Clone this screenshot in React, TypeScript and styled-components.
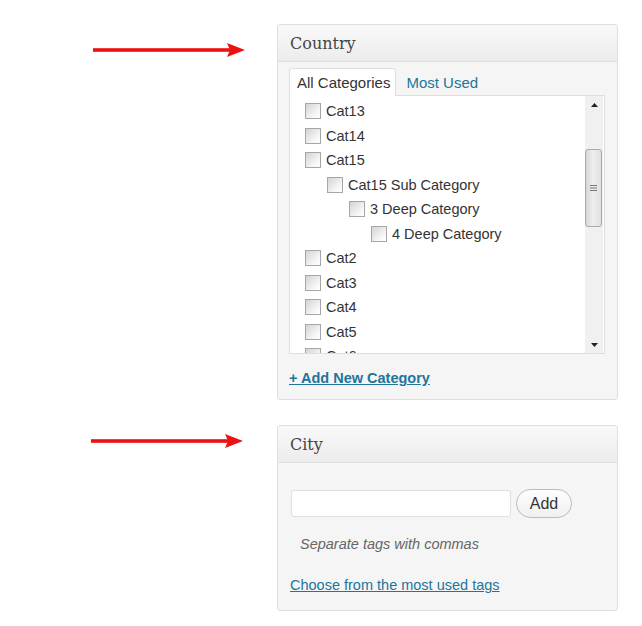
import React from 'react'
import styled, {createGlobalStyle} from 'styled-components'

type Cat = { name: string, depth: number }

const cats: Cat[] = [
    { name: 'Cat13', depth: 0 },
    { name: 'Cat14', depth: 0 },
    { name: 'Cat15', depth: 0 },
    { name: 'Cat15 Sub Category', depth: 1 },
    { name: '3 Deep Category', depth: 2 },
    { name: '4 Deep Category', depth: 3 },
    { name: 'Cat2', depth: 0 },
    { name: 'Cat3', depth: 0 },
    { name: 'Cat4', depth: 0 },
    { name: 'Cat5', depth: 0 },
    { name: 'Cat6', depth: 0 },
]

const App = () => {
    return <>
        <GlobalStyle/>
        <Page>

            <Row>
                <ArrowCell $left={93} $top={18}><RedArrow/></ArrowCell>
                <Box $height={376}>
                    <BoxHeader>Country</BoxHeader>
                    <CategoryBody>
                        <Tabs>
                            <Tab $active>All Categories</Tab>
                            <Tab>Most Used</Tab>
                        </Tabs>
                        <ListFrame>
                            <List>
                                { cats.map(it=><CatRow key={it.name} $depth={it.depth}>
                                    <Check/>
                                    <span>{it.name}</span>
                                </CatRow>) }
                            </List>
                            <Scrollbar>
                                <ScrollArrow><svg width="7" height="4"><polygon points="0,4 3.5,0 7,4" fill="#222"/></svg></ScrollArrow>
                                <Track>
                                    <Thumb>
                                        <svg width="7" height="6">
                                            <rect x="0" y="0" width="7" height="1" fill="#777"/>
                                            <rect x="0" y="2.5" width="7" height="1" fill="#777"/>
                                            <rect x="0" y="5" width="7" height="1" fill="#777"/>
                                        </svg>
                                    </Thumb>
                                </Track>
                                <ScrollArrow><svg width="7" height="4"><polygon points="0,0 3.5,4 7,0" fill="#222"/></svg></ScrollArrow>
                            </Scrollbar>
                        </ListFrame>
                        <AddLink href="#">+ Add New Category</AddLink>
                    </CategoryBody>
                </Box>
            </Row>

            <Row>
                <ArrowCell $left={91} $top={8}><RedArrow/></ArrowCell>
                <Box $height={186}>
                    <BoxHeader>City</BoxHeader>
                    <TagBody>
                        <TagForm>
                            <TagInput type="text"/>
                            <AddButton>Add</AddButton>
                        </TagForm>
                        <Hint>Separate tags with commas</Hint>
                        <MostUsed href="#">Choose from the most used tags</MostUsed>
                    </TagBody>
                </Box>
            </Row>

        </Page>
    </>
}
export default App



const RedArrow = () => <svg width="152" height="16" viewBox="0 0 152 16">
    <rect x="0" y="6.2" width="138" height="3.6" fill="#ee1111"/>
    <polygon points="134,1 152,8 134,15 137,8" fill="#ee1111"/>
</svg>


const GlobalStyle = createGlobalStyle`
  html, body {
    margin: 0;
    padding: 0;
    background: #fff;
  }
  body {
    font-family: "Liberation Sans", Arial, sans-serif;
    font-size: 14px;
    color: #333;
  }
`

const Page = styled.div`
  display: flex;
  flex-direction: column;
  gap: 25px;
  padding-top: 24px;
`

const Row = styled.div`
  display: flex;
  align-items: flex-start;
`

const ArrowCell = styled.div<{ $left: number, $top: number }>`
  width: 277px;
  box-sizing: border-box;
  padding-left: ${p=>p.$left}px;
  padding-top: ${p=>p.$top}px;
  line-height: 0;
`

const Box = styled.div<{ $height: number }>`
  width: 341px;
  height: ${p=>p.$height}px;
  box-sizing: border-box;
  border: 1px solid #dfdfdf;
  border-radius: 3px;
  background: #f5f5f5;
  display: flex;
  flex-direction: column;
`

const BoxHeader = styled.div`
  height: 36px;
  flex-shrink: 0;
  border-bottom: 1px solid #dfdfdf;
  background: linear-gradient(to bottom, #f9f9f9, #ececec);
  border-radius: 3px 3px 0 0;
  padding-left: 12px;
  display: flex;
  align-items: center;
  font-family: "DejaVu Serif", Georgia, serif;
  font-size: 16px;
  color: #464646;
`

const CategoryBody = styled.div`
  padding: 6px 12px 0 11px;
  display: flex;
  flex-direction: column;
`

const Tabs = styled.div`
  display: flex;
  height: 27px;
  gap: 2px;
  position: relative;
  z-index: 1;
`

const Tab = styled.div<{ $active?: boolean }>`
  height: 28px;
  box-sizing: border-box;
  padding: 0 5px 1px 7px;
  display: flex;
  align-items: center;
  font-size: 15px;
  border: 1px solid ${p=>p.$active ? '#dfdfdf' : 'transparent'};
  border-bottom: none;
  border-radius: 3px 3px 0 0;
  background: ${p=>p.$active ? '#fff' : 'transparent'};
  color: ${p=>p.$active ? '#333' : '#21759b'};
`

const ListFrame = styled.div`
  height: 259px;
  box-sizing: border-box;
  border: 1px solid #dfdfdf;
  background: #fff;
  display: flex;
  overflow: hidden;
`

const List = styled.div`
  flex: 1;
  padding-top: 3px;
  overflow: hidden;
`

const CatRow = styled.div<{ $depth: number }>`
  height: 24.5px;
  display: flex;
  align-items: center;
  gap: 5px;
  padding-left: ${p=>15 + p.$depth*22}px;
  font-size: 14.5px;
  color: #333;
  white-space: nowrap;
`

const Check = styled.span`
  width: 14px;
  height: 14px;
  flex-shrink: 0;
  border: 1px solid #a6a6a6;
  background: linear-gradient(135deg, #d4d4d4, #f6f6f6 70%, #fff);
`

const Scrollbar = styled.div`
  width: 18px;
  margin-right: 1px;
  background: #f0f0f0;
  display: flex;
  flex-direction: column;
`

const ScrollArrow = styled.div`
  height: 17px;
  display: flex;
  align-items: center;
  justify-content: center;
`

const Track = styled.div`
  flex: 1;
  padding-top: 36px;
`

const Thumb = styled.div`
  height: 78px;
  width: 17px;
  box-sizing: border-box;
  border: 1px solid #aaa;
  border-radius: 3px;
  background: linear-gradient(to right, #d6d6d6, #eeeeee 45%, #e0e0e0);
  display: flex;
  align-items: center;
  justify-content: center;
`

const AddLink = styled.a`
  margin-top: 16px;
  line-height: 17px;
  font-size: 14.5px;
  font-weight: bold;
  color: #21759b;
  text-decoration: underline;
  align-self: flex-start;
`

const TagBody = styled.div`
  padding: 26px 12px 0 12px;
  display: flex;
  flex-direction: column;
`

const TagForm = styled.div`
  display: flex;
  align-items: center;
  gap: 5px;
  padding-left: 1px;
`

const TagInput = styled.input`
  width: 220px;
  height: 27px;
  box-sizing: border-box;
  border: 1px solid #dfdfdf;
  border-radius: 3px;
  background: #fff;
  outline: none;
`

const AddButton = styled.button`
  width: 56px;
  height: 29px;
  box-sizing: border-box;
  border: 1px solid #bbb;
  border-radius: 15px;
  background: linear-gradient(to bottom, #fefefe, #f0f0f0);
  font-family: "Liberation Sans", Arial, sans-serif;
  font-size: 16px;
  color: #333;
  padding: 0;
`

const Hint = styled.p`
  margin: 18px 0 0 10px;
  line-height: 17px;
  font-size: 14.5px;
  font-style: italic;
  color: #666;
`

const MostUsed = styled.a`
  margin-top: 24px;
  line-height: 17px;
  font-size: 14.5px;
  color: #21759b;
  text-decoration: underline;
  align-self: flex-start;
`
